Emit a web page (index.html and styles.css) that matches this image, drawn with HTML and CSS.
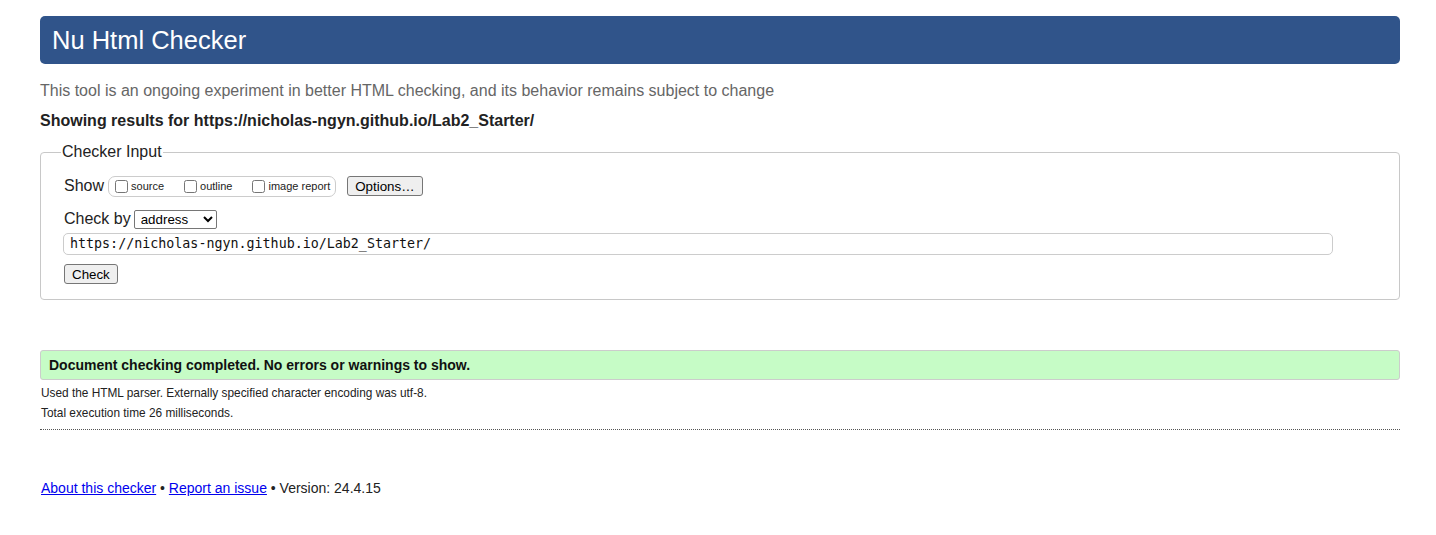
FILE: index.html
```html
<!DOCTYPE html>
<html>
<head>
<meta charset="utf-8">
<title>Nu Html Checker</title>
<link rel="stylesheet" href="styles.css">
</head>
<body>
<div class="page">
  <h1 class="title">Nu Html Checker</h1>
  <p class="intro">This tool is an ongoing experiment in better HTML checking, and its behavior remains subject to change</p>
  <p class="showing">Showing results for https://nicholas-ngyn.github.io/Lab2_Starter/</p>
  <fieldset class="input-box">
    <legend class="legend">Checker Input</legend>
    <div class="row show-row">
      <span class="label">Show</span>
      <span class="show-group">
        <label class="opt"><input type="checkbox" class="cb">source</label>
        <label class="opt"><input type="checkbox" class="cb">outline</label>
        <label class="opt"><input type="checkbox" class="cb">image report</label>
      </span>
      <button class="btn btn-options">Options…</button>
    </div>
    <div class="row checkby-row">
      <span class="label">Check by</span>
      <select class="select"><option>address</option></select>
    </div>
    <div class="url">https://nicholas-ngyn.github.io/Lab2_Starter/</div>
    <button class="btn btn-check">Check</button>
  </fieldset>
  <div class="success">Document checking completed. No errors or warnings to show.</div>
  <p class="meta">Used the HTML parser. Externally specified character encoding was utf-8.</p>
  <p class="meta">Total execution time 26 milliseconds.</p>
  <div class="footer">
    <a href="#" class="link">About this checker</a> • <a href="#" class="link">Report an issue</a> • Version: 24.4.15
  </div>
</div>
</body>
</html>
```
FILE: styles.css
```css
html, body {
  margin: 0;
  padding: 0;
  background: #fff;
}
.page {
  padding: 16px 36px 0 40px;
  font-family: "Liberation Sans", Arial, sans-serif;
  color: #222;
}
.title {
  margin: 0;
  height: 48px;
  box-sizing: border-box;
  background: #30548a;
  color: #fff;
  font-weight: normal;
  font-size: 25.5px;
  line-height: 48px;
  padding: 0 12px;
  border-radius: 5px;
}
.intro {
  margin: 17px 0 0;
  font-size: 16px;
  line-height: 20px;
  color: #666;
}
.showing {
  margin: 10px 0 0;
  font-size: 16px;
  line-height: 20px;
  font-weight: bold;
  color: #222;
}
.input-box {
  margin: 12px 0 0;
  border: 1px solid #c8c8c8;
  border-radius: 4px;
  padding: 12px 23px 15px;
}
.legend {
  font-size: 16px;
  padding: 0 1px;
  margin-left: -3px;
  color: #222;
}
.row {
  display: flex;
  align-items: center;
}
.show-row {
  height: 22px;
  margin-top: 2px;
}
.label {
  font-size: 16px;
  color: #222;
}
.show-group {
  display: inline-flex;
  align-items: center;
  border: 1px solid #ccc;
  border-radius: 7px;
  height: 19px;
  padding: 0 5px 0 6px;
  margin-left: 4px;
}
.opt {
  display: inline-flex;
  align-items: center;
  font-size: 11px;
  color: #222;
  margin-right: 20px;
}
.opt:last-child { margin-right: 0; }
.cb {
  margin: 0 3px 0 0;
  width: 13px;
  height: 13px;
}
.btn {
  font-family: "Liberation Sans", Arial, sans-serif;
  font-size: 13.333px;
  color: #000;
  background: #efefef;
  border: 1px solid #767676;
  border-radius: 3px;
  padding: 0 7px;
  height: 20px;
}
.btn-options {
  margin-left: 11px;
}
.checkby-row {
  margin-top: 11px;
  height: 22px;
}
.select {
  margin-left: 3px;
  font-family: "Liberation Sans", Arial, sans-serif;
  font-size: 13.333px;
  height: 19px;
  width: 83px;
  border: 1px solid #767676;
  border-radius: 2px;
  background: #fff;
  color: #000;
  padding: 0 0 0 2px;
}
.url {
  margin-top: 3px;
  margin-left: -1px;
  margin-right: 43px;
  height: 22px;
  box-sizing: border-box;
  border: 1px solid #ccc;
  border-radius: 5px;
  font-family: "DejaVu Sans Mono", "Liberation Mono", monospace;
  font-size: 13.333px;
  line-height: 20px;
  padding: 0 6px;
  color: #111;
}
.btn-check {
  margin-top: 9px;
  display: block;
}
.success {
  margin-top: 50px;
  background: #c6fcc6;
  border: 1px solid #ccc;
  border-radius: 3px;
  height: 30px;
  box-sizing: border-box;
  font-size: 14px;
  font-weight: bold;
  line-height: 28px;
  padding: 0 8px;
  color: #111;
}
.meta {
  margin: 6px 0 0 1px;
  font-size: 11.85px;
  line-height: 14px;
  color: #222;
}
.meta + .meta {
  margin-top: 6px;
  padding-bottom: 9px;
  border-bottom: 1px dotted #555;
  margin-left: 0;
  padding-left: 1px;
}
.footer {
  margin-top: 50px;
  margin-left: 1px;
  font-size: 14px;
  color: #222;
}
.link {
  color: #00e;
}
```
